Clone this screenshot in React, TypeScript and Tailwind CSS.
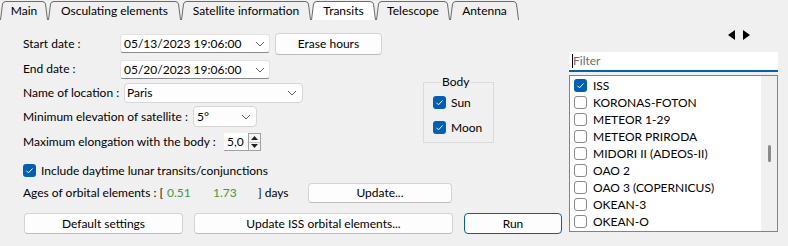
import type { ReactNode } from 'react';

const tabs = [
  { label: 'Main', width: 'w-[36px]' },
  { label: 'Osculating elements', width: 'w-[121px]' },
  { label: 'Satellite information', width: 'w-[118px]' },
  { label: 'Transits', width: 'w-[53px]', active: true },
  { label: 'Telescope', width: 'w-[62px]' },
  { label: 'Antenna', width: 'w-[57px]' },
];

const satellites = [
  { name: 'ISS', checked: true },
  { name: 'KORONAS-FOTON' },
  { name: 'METEOR 1-29' },
  { name: 'METEOR PRIRODA' },
  { name: 'MIDORI II (ADEOS-II)' },
  { name: 'OAO 2' },
  { name: 'OAO 3 (COPERNICUS)' },
  { name: 'OKEAN-3' },
  { name: 'OKEAN-O' },
];

const TabSeparator = ({ leftActive, rightActive }: { leftActive?: boolean; rightActive?: boolean }) => (
  <svg width="12" height="19" viewBox="0 0 12 19" className="shrink-0">
    {leftActive && <path d="M0 0.5 Q3 0.5 3.5 3 L5.5 19 L0 19 Z" fill="#ffffff" />}
    {rightActive && <path d="M6.5 19 L8.5 3 Q9 0.5 12 0.5 L12 19 Z" fill="#ffffff" />}
    <path d="M0 0.5 Q3 0.5 3.5 3 L5.5 19" fill="none" stroke="#6b6b6b" />
    <path d="M6.5 19 L8.5 3 Q9 0.5 12 0.5" fill="none" stroke="#6b6b6b" />
  </svg>
);

const TabStrip = () => (
  <div className="flex h-[20px] pt-[1px]">
    <svg width="6" height="19" viewBox="0 0 6 19" className="shrink-0">
      <path d="M0.5 19 L2.5 3 Q3 0.5 6 0.5" fill="none" stroke="#6b6b6b" />
    </svg>
    {tabs.map((tab, i) => (
      <div key={tab.label} className="flex">
        <div
          className={`${tab.width} flex h-[19px] items-center justify-center border-t border-[#6b6b6b] whitespace-nowrap ${
            tab.active ? 'bg-white' : ''
          }`}
        >
          {tab.label}
        </div>
        {i < tabs.length - 1 && (
          <TabSeparator leftActive={tab.active} rightActive={tabs[i + 1].active} />
        )}
      </div>
    ))}
    <svg width="6" height="19" viewBox="0 0 6 19" className="shrink-0">
      <path d="M0 0.5 Q3 0.5 3.5 3 L5.5 19" fill="none" stroke="#6b6b6b" />
    </svg>
  </div>
);

const Chevron = () => (
  <svg width="10" height="6" viewBox="0 0 10 6" className="shrink-0">
    <path d="M1 1 L5 5 L9 1" fill="none" stroke="#5f5f5f" strokeWidth="1" />
  </svg>
);

const Checkbox = ({ checked }: { checked?: boolean }) =>
  checked ? (
    <span className="flex h-[13px] w-[13px] shrink-0 items-center justify-center rounded-[3px] bg-[#005fb8]">
      <svg width="13" height="13" viewBox="0 0 13 13">
        <path d="M3.5 6.8 L5.5 8.8 L9.5 4.5" fill="none" stroke="#ffffff" strokeWidth="1" />
      </svg>
    </span>
  ) : (
    <span className="h-[13px] w-[13px] shrink-0 rounded-[3px] border border-[#8a8a8a] bg-white" />
  );

const Button = ({ children, className }: { children: ReactNode; className: string }) => (
  <button
    type="button"
    className={`flex items-center justify-center rounded-[4px] border border-[#d3d3d3] border-b-[#bdbdbd] bg-[#fdfdfd] text-black ${className}`}
  >
    {children}
  </button>
);

const DateBox = ({ value }: { value: string }) => (
  <div className="mt-[1px] flex h-[19px] w-[150px] items-center justify-between rounded-[3px] border border-[#e3e3e3] border-b-[#8a8a8a] bg-white pl-[3px] pr-[4px]">
    <span>{value}</span>
    <Chevron />
  </div>
);

const App = () => {
  return (
    <div className="h-[246px] w-[788px] overflow-hidden bg-[#f0f0f0] font-['Lato',sans-serif] text-[12px] leading-[16px] text-black">
      <TabStrip />

      <div className="flex">
        {/* left side: form */}
        <div className="w-[569px] pl-[23px]">
          <div className="flex">
            <div className="flex w-[400px] flex-col">
              <div className="mt-[13px] flex h-[22px] items-start">
                <span className="w-[97px] pt-[3px] whitespace-nowrap">Start date :</span>
                <DateBox value="05/13/2023 19:06:00" />
                <Button className="ml-[5px] h-[22px] w-[107px]">Erase hours</Button>
              </div>

              <div className="mt-[4px] flex h-[21px] items-start">
                <span className="w-[97px] pt-[2px] whitespace-nowrap">End date :</span>
                <DateBox value="05/20/2023 19:06:00" />
              </div>

              <div className="mt-[3px] flex h-[20px] items-center">
                <span className="w-[101px] whitespace-nowrap">Name of location :</span>
                <div className="flex h-[20px] w-[179px] items-center justify-between rounded-[4px] border border-[#d6d6d6] bg-[#fdfdfd] pl-[2px] pr-[5px]">
                  <span>Paris</span>
                  <Chevron />
                </div>
              </div>

              <div className="mt-[3px] flex h-[21px] items-center">
                <span className="w-[170px] whitespace-nowrap">Minimum elevation of satellite :</span>
                <div className="flex h-[21px] w-[64px] items-center justify-between rounded-[4px] border border-[#d6d6d6] bg-[#fdfdfd] pl-[3px] pr-[5px]">
                  <span>5°</span>
                  <Chevron />
                </div>
              </div>

              <div className="mt-[6px] flex h-[18px] items-center">
                <span className="w-[201px] whitespace-nowrap">Maximum elongation with the body :</span>
                <div className="flex h-[18px]">
                  <div className="flex w-[24px] items-center border-b border-[#a0a0a0] bg-white pl-[3px]">5,0</div>
                  <div className="flex w-[13px] flex-col border border-[#a0a0a0] bg-[#f5f5f5]">
                    <div className="flex flex-1 items-center justify-center border-b border-[#c8c8c8]">
                      <svg width="7" height="4" viewBox="0 0 7 4">
                        <polygon points="0,4 3.5,0 7,4" fill="#222222" />
                      </svg>
                    </div>
                    <div className="flex flex-1 items-center justify-center">
                      <svg width="7" height="4" viewBox="0 0 7 4">
                        <polygon points="0,0 3.5,4 7,0" fill="#222222" />
                      </svg>
                    </div>
                  </div>
                </div>
              </div>
            </div>

            <fieldset className="mt-[54px] h-[69px] w-[71px] border border-[#dcdcdc] pl-[9px]">
              <legend className="ml-[8px] px-[1px] leading-[16px]">Body</legend>
              <div className="mt-[6px] flex h-[13px] items-center gap-[5px]">
                <Checkbox checked />
                <span>Sun</span>
              </div>
              <div className="mt-[12px] flex h-[13px] items-center gap-[5px]">
                <Checkbox checked />
                <span>Moon</span>
              </div>
            </fieldset>
          </div>

          <div className="mt-[13px] flex h-[13px] items-center gap-[5px]">
            <Checkbox checked />
            <span className="whitespace-nowrap">Include daytime lunar transits/conjunctions</span>
          </div>

          <div className="mt-[6px] flex h-[20px] items-center">
            <span className="w-[144px] whitespace-nowrap">Ages of orbital elements : [</span>
            <span className="w-[46px] text-[#3f9a3f]">0.51</span>
            <span className="w-[45px] text-[#3f9a3f]">1.73</span>
            <span className="w-[50px] whitespace-nowrap">] days</span>
            <Button className="h-[20px] w-[144px]">Update...</Button>
          </div>

          <div className="mt-[10px] flex h-[21px] items-center">
            <Button className="ml-[1px] h-[21px] w-[159px]">Default settings</Button>
            <Button className="ml-[11px] h-[21px] w-[259px]">Update ISS orbital elements...</Button>
            <button
              type="button"
              className="ml-[11px] flex h-[21px] w-[98px] items-center justify-center rounded-[4px] border-[1.5px] border-[#005fb8] bg-[#fdfdfd] text-black"
            >
              Run
            </button>
          </div>
        </div>

        {/* right side: satellite list */}
        <div className="flex w-[209px] flex-col">
          <div className="mt-[10px] ml-[159px] flex h-[10px] items-center gap-[8px]">
            <svg width="7" height="10" viewBox="0 0 7 10">
              <polygon points="7,0 0,5 7,10" fill="#000000" />
            </svg>
            <svg width="7" height="10" viewBox="0 0 7 10">
              <polygon points="0,0 7,5 0,10" fill="#000000" />
            </svg>
          </div>

          <div className="mt-[12px] flex h-[20px] items-center border-b-2 border-[#005fb8] bg-white pl-[3px]">
            <span className="h-[14px] w-[1px] bg-black" />
            <span className="text-[#6d6d6d]">Filter</span>
          </div>

          <div className="mt-[3px] flex h-[157px] border border-[#838383] bg-white">
            <div className="flex flex-1 flex-col pt-[1px]">
              {satellites.map((sat) => (
                <div key={sat.name} className="flex h-[17px] items-center gap-[6px] pl-[4px]">
                  <Checkbox checked={sat.checked} />
                  <span className="whitespace-nowrap">{sat.name}</span>
                </div>
              ))}
            </div>
            <div className="w-[16px] bg-[#f0f0f0] pt-[69px] pl-[7px]">
              <div className="h-[17px] w-[3px] rounded-full bg-[#8a8a8a]" />
            </div>
          </div>
        </div>
      </div>
    </div>
  );
};

export default App;
